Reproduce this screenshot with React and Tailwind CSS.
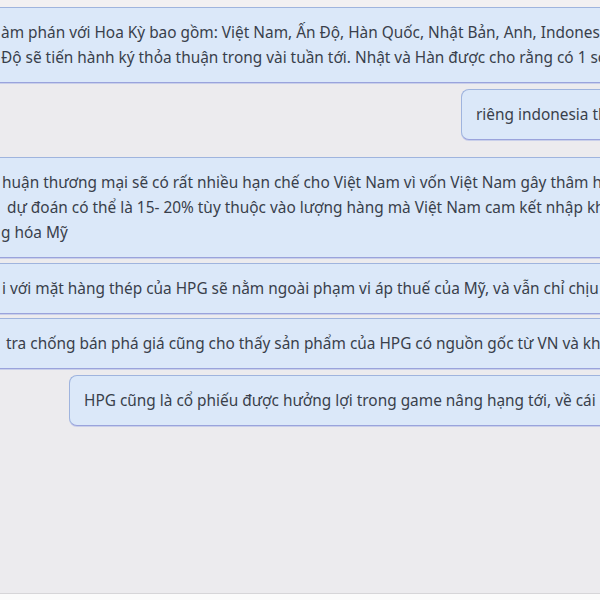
import React from "react";

const leftBubbles = {
    first: [
        { text: "àm phán với Hoa Kỳ bao gồm: Việt Nam, Ấn Độ, Hàn Quốc, Nhật Bản, Anh, Indonesia", pad: "pl-[1px]" },
        { text: "Độ sẽ tiến hành ký thỏa thuận trong vài tuần tới. Nhật và Hàn được cho rằng có 1 số", pad: "pl-[1px]" },
    ],
    second: [
        { text: "huận thương mại sẽ có rất nhiều hạn chế cho Việt Nam vì vốn Việt Nam gây thâm hụt", pad: "pl-[2px]" },
        { text: "dự đoán có thể là 15- 20% tùy thuộc vào lượng hàng mà Việt Nam cam kết nhập khẩu", pad: "pl-[7px]" },
        { text: "g hóa Mỹ", pad: "pl-[1px]" },
    ],
    third: [
        { text: "i với mặt hàng thép của HPG sẽ nằm ngoài phạm vi áp thuế của Mỹ, và vẫn chỉ chịu", pad: "pl-[2px]" },
    ],
    fourth: [
        { text: "tra chống bán phá giá cũng cho thấy sản phẩm của HPG có nguồn gốc từ VN và không", pad: "pl-[6px]" },
    ],
};

function LeftBubble({ lines, className = "" }) {
    return (
        <div className={`border-y border-[#9fb4de] border-b-[#9aa3dc] bg-[#dbe8f9] py-[12px] shadow-[0_1px_0_#c9cfea] ${className}`}>
            {lines.map((line, i) => (
                <div key={i} className={`whitespace-nowrap leading-[25px] ${line.pad}`}>
                    {line.text}
                </div>
            ))}
        </div>
    );
}

function RightBubble({ text, offset, className = "" }) {
    return (
        <div className={`flex ${offset} ${className}`}>
            <div className="flex-1 rounded-l-lg border border-r-0 border-[#9fb4de] border-b-[#9aa3dc] bg-[#dbe8f9] py-[12px] pl-[14px] shadow-[0_1px_0_#c9cfea]">
                <div className="whitespace-nowrap leading-[25px]">{text}</div>
            </div>
        </div>
    );
}

export default function App() {
    return (
        <div
            className="relative h-[600px] w-[600px] overflow-hidden bg-[#ecebee] text-[15.4px] text-[#393f4b]"
            style={{ fontFamily: '"Noto Sans", "DejaVu Sans", sans-serif' }}
        >
            <div className="h-[7px] bg-[#f2f0f2]" />
            <div className="flex flex-col">
                <LeftBubble lines={leftBubbles.first} />
                <RightBubble text="riêng indonesia thì đã có thông tin" offset="pl-[461px]" className="mt-[6px]" />
                <LeftBubble lines={leftBubbles.second} className="mt-[17px]" />
                <LeftBubble lines={leftBubbles.third} className="mt-[5px]" />
                <LeftBubble lines={leftBubbles.fourth} className="mt-[4px]" />
                <RightBubble
                    text="HPG cũng là cổ phiếu được hưởng lợi trong game nâng hạng tới, về cái này thì"
                    offset="pl-[69px]"
                    className="mt-[6px]"
                />
            </div>
            <div className="absolute bottom-0 left-0 h-[7px] w-full border-t border-[#d6d5d8] bg-[#fbfbfb]" />
        </div>
    );
}
